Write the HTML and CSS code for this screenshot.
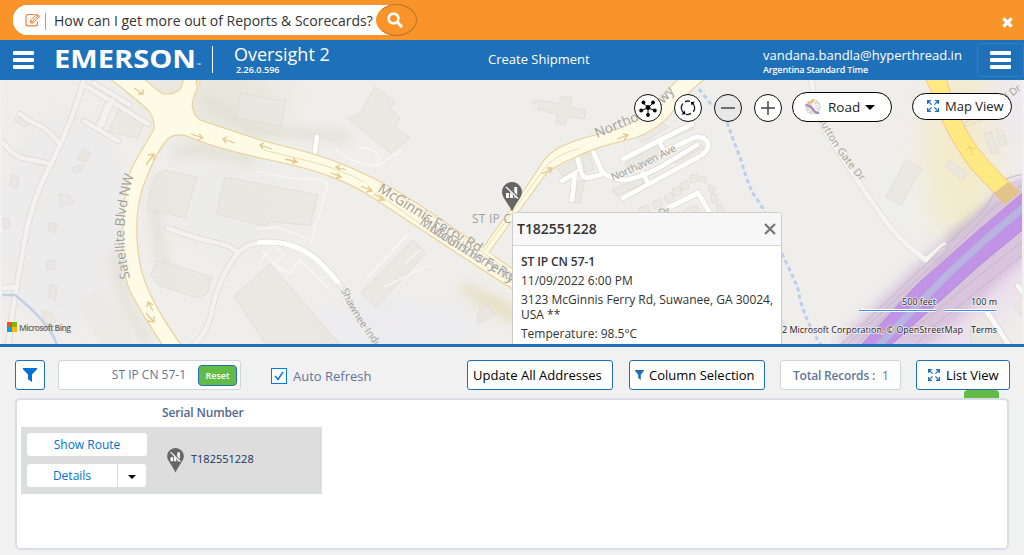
FILE: index.html
```html
<!DOCTYPE html>
<html lang="en">
<head>
<meta charset="utf-8">
<title>Oversight 2</title>
<link rel="stylesheet" href="styles.css">
</head>
<body>
<svg class="defs" width="0" height="0" aria-hidden="true">
  <symbol id="pin" viewBox="0 0 20 30">
    <path fill="#666" d="M10 0C4.500 0 0 4.500 0 10c0 5.500 5.500 10 10 19.500C14.500 20 20 15.500 20 10 20 4.500 15.500 0 10 0z"/>
    <path fill="#fff" d="M4 11h3v5H4zM8 8.500h3V16H8zM12.300 5h2.900v11h-2.900z"/>
    <path stroke="#666" stroke-width="2.800" d="M4.500 4.500l12 12"/><path stroke="#fff" stroke-width="1.300" d="M4 5l12 11.500"/>
  </symbol>
  <symbol id="expand" viewBox="0 0 12 12">
    <path fill="none" stroke="#1e70b9" stroke-width="1.300" d="M.6 4V.6H4M.6.6l4 4M8 .6h3.400V4M11.400.6l-4 4M.6 8v3.400H4M.6 11.400l4-4M11.400 8v3.400H8M11.400 11.400l-4-4"/>
  </symbol>
  <symbol id="funnel" viewBox="0 0 14 14"><path d="M0 0h14v1.200L9 6.500V14l-4-2.800V6.500L0 1.200z"/></symbol>
</svg>

<div class="ask">
  <div class="ask-box">
    <svg class="edit" viewBox="0 0 16 14"><path fill="none" stroke="#f47b42" stroke-width="1.200" d="M9.500 1.500H3A2 2 0 0 0 1 3.500v7.300a2 2 0 0 0 2 2h7.500a2 2 0 0 0 2-2V8.500"/><path fill="none" stroke="#f47b42" d="M5.500 10V7.200L12 .9l2.700 2.600L8.300 10z"/><path stroke="#f47b42" stroke-width="1" d="M6.600 8.900L13 2.600M11 1.800l3 3M5.700 7.400l2.600 2.600"/></svg>
    <span class="caret"></span>
    <span class="ask-text">How can I get more out of Reports &amp; Scorecards?</span>
    <span class="ask-go"><svg viewBox="0 0 16 16"><circle cx="6.500" cy="6.500" r="4.900" fill="none" stroke="#fff" stroke-width="2.600"/><path stroke="#fff" stroke-width="3" stroke-linecap="round" d="M10.600 10.600l3.500 3.500"/></svg></span>
  </div>
  <svg class="ask-close" viewBox="0 0 12 12"><path stroke="#fff" stroke-width="3.800" d="M1.500 1.500l9 9M10.500 1.500l-9 9"/></svg>
</div>

<header class="bar">
  <span class="burger"><i></i><i></i><i></i></span>
  <svg class="brand" viewBox="0 0 150 30"><text x="0" y="21" textLength="142" lengthAdjust="spacingAndGlyphs">EMERSON</text><text class="tm" x="143" y="20">™</text></svg>
  <div class="product"><span class="name">Oversight 2</span><span class="ver">2.26.0.596</span></div>
  <span class="page">Create Shipment</span>
  <div class="user"><span class="mail">vandana.bandla@hyperthread.in</span><span class="tz">Argentina Standard Time</span></div>
  <span class="menu"><span class="burger"><i></i><i></i><i></i></span></span>
</header>

<section class="map">
<svg class="canvas" viewBox="0 80 1024 264">
  <defs>
    <filter id="b" x="-50%" y="-50%" width="200%" height="200%"><feGaussianBlur stdDeviation="6"/></filter>
    <filter id="b2" x="-50%" y="-50%" width="200%" height="200%"><feGaussianBlur stdDeviation="16"/></filter>
    <path id="p-sat" d="M130 278C124 255 123 232 126 212C128 196 131 184 135 172"/>
    <path id="p-mcg" d="M377 191L412 213Q448 235 481 254"/>
    <path id="p-mcg2" d="M419 224Q458 250 516 284"/>
    <path id="p-mcg3" d="M429 231Q466 255 514 284"/>
    <path id="p-sha" d="M341 290Q352 318 380 352"/>
    <path id="p-nor" d="M597 138L640 120Q662 109 678 87"/>
    <path id="p-hav" d="M613 181Q645 167 680 149"/>
    <path id="p-sut" d="M818 119Q835 153 863 184"/>
    <g id="streets">
      <path d="M84 78Q76 112 53 160C37 190 32 208 27 228L15 295 8 346M0 288l15-1M20 114q10 8 23 13 10 8 18 18M1 140q12 16 22 18l28 6M86 86l36 22 26 16M94 83l36 22M107 105l-8 22M84 121l34 20M112 100l-10 25M168 228q28 11 50 15 14 3 20 10Q218 277 211 315 205 337 192 346M238 253q10-11 30-11 30 0 51 19 18 18 24 28"/>
    </g>
    <g id="lots">
      <path d="M577 157l4 15q1 5 6 6l13-3M562 181l13-8-3 27M593 151l9 21q9 8 25 8 18-4 35-14l35-21M315 152l2-15M668 208l30-15 13 22"/>
      <path d="M623 159l69-35M660 143l4 8M643 173l5 10M623 198l79-43q9-7 5-14-6-6-14-3l-32 15"/>
    </g>
  </defs>
  <rect x="0" y="80" width="1024" height="264" fill="#efeeeb"/>
  <g filter="url(#b2)">
    <ellipse cx="65" cy="220" rx="65" ry="110" fill="#ecebec"/>
    <ellipse cx="215" cy="100" rx="75" ry="45" fill="#e9e7dd"/>
    <ellipse cx="230" cy="210" rx="70" ry="50" fill="#ecece9"/>
    <ellipse cx="390" cy="325" rx="100" ry="22" fill="#ecebef"/>
    <ellipse cx="960" cy="150" rx="36" ry="90" fill="#f3ebc9"/>
    <ellipse cx="1010" cy="110" rx="22" ry="40" fill="#efe8f0"/>
    <ellipse cx="905" cy="130" rx="20" ry="50" fill="#f1ecec"/>
    <path d="M1040 180L830 360h130l100-110z" fill="#ecdced"/>
    <ellipse cx="905" cy="190" rx="20" ry="22" fill="#ebf1ec"/>
  </g>
  <g filter="url(#b)">
    <path d="M205 100L255 130 350 137M174 155q25-12 80 8M158 180q-8 65 15 103M115 250q2 50 35 94" fill="none" stroke="#dfdccf" stroke-width="8"/>
    <path d="M460 286l55 25M475 300l45 20" stroke="#e6e0c4" stroke-width="10"/>
    <path d="M1030 172L935 248 835 345 930 345 1030 254z" fill="#d6c3dc"/>
    <path d="M1000 200L950 240" stroke="#b5a4b6" stroke-width="6"/>
  </g>
  <!-- buildings -->
  <g fill="#e9e6e1" fill-opacity=".85" stroke="#dfdbd5" stroke-width=".8">
    <path d="M241 93l41 8 4-3-5 28-45-8zM157 174l9-4 31 7-12 41-38-10 4-17zM225 177l93 18-8 30-40-3-5 4-49-12zM157 260l55 17-5 17-10 4-39-13-7-10zM234 296l36-32 70 80h-74zM375 87l20 14-5 8 10 9-5 8 15 12-19 15-43-34 13-7zM413 240l13 13-50 54-15-14zM120 106l24 17-6 15-30-6z"/>
    <path stroke="none" d="M77 304l18-14 28 20 12 34h-35z" opacity=".5"/>
    <path d="M478 312l11-8 4 12-16 8zM906 160l16 8-21 37-15-8zM950 160l17 13-4 8-18-15zM984 134l7-3 8 22-8 1zM996 129l7 2 4 13-7 2zM540 100l18 4 4-8 10 2-2 9 16 3-2 9-17-2-2 8-9-2 1-9-20-5zM532 102l4-4 2 2-4 5z"/>
    <path d="M14 120l8-5 12 7-10 5zM78 156l6-7 7 4-5 9-8-2zM73 167l11-2-3 6-8 2zM12 175l7 2-2 12-8-4zM59 194l10 1 5 8-13 3zM50 223l7 1-2 9-7-3zM3 218l6 1 1 10-7-1zM47 261h8v8h-8zM50 285l7 1-2 15-6-3zM42 310l9 3 5 9-12 3z"/>
    <path d="M557 169l17-9 5 8-17 8zM582 155l7-3 5 17-9 4zM625 163l32-17 5 7-33 17zM672 158l26-15 6 4-29 17zM612 190l31-14 4 6-31 14zM635 135l26-13 8 5-27 16zM666 134l24-12 3 7-23 10zM578 182l7-2-5 24-6-1z"/>
    <path d="M639 208l9-3 3 7-11 2zM652 202l8-3 3 7-9 3zM664 196l8-4 2 8-8 3zM672 189l8-3 2 8-8 3zM680 184l7-4 2 8-7 3zM690 176l7-2 0 8-7 1zM700 176l7 1-1 6-7-2zM709 184l7 4-2 5-6-3zM711 193l6 2 1 7-6 1zM716 204l6 1 3 7-7 1zM685 210l12-5 2 8h-16zM1013 307l9-9v20zM970 320l18-9 15 33h-32zM780 320l4 1v5h-5z"/>
  </g>
  <!-- footpaths -->
  <path fill="none" stroke="#f9f8f5" stroke-width="1.300" d="M257 171q25 8 50 8 20 0 21 6l-18 60M257 229l20-2 30 11M335 146q7 15 42 20 8-17-20-19M377 166l25-16M258 264l16-19 10 9-10 10 16 9 10-13 28 28M367 278l40-43M384 287l46-22M262 250l20 22M405 263l14-12"/>
  <!-- side streets -->
  <g fill="none" stroke-linecap="round">
    <use href="#streets" stroke="#dad5c9" stroke-width="6"/><use href="#streets" stroke="#f3f2f0" stroke-width="4.800"/>
    <path stroke="#fff" stroke-width="4.600" stroke-linecap="butt" d="M257 243q35-5 61 18 14 13 20 22"/>
    <path stroke="#dedacd" d="M342 286q17 32 35 58"/>
    <use href="#lots" stroke="#dfd8c8" stroke-width="6.200"/><use href="#lots" stroke="#fff" stroke-width="4.800"/>
    <path stroke="#dcd8ce" stroke-width="6.200" d="M811 78q3 25 15 55l36 54q22 33 34 47 12 13 30 26l18-15"/><path stroke="#f5f4f2" stroke-width="5" d="M811 78q3 25 15 55l36 54q22 33 34 47 12 13 30 26l18-15"/>
  </g>
  <!-- streams -->
  <path d="M2 295h13q35 28 42 50" fill="none" stroke="#c3d0e8" stroke-width="2.500"/>
  <path d="M699 89l12 15 12 7 10 28 8 21q5 18 11 32l12 18 20 48q8 16 14 31 5 30 24 57" fill="none" stroke="#b9cff2" stroke-width="3" stroke-dasharray="4.500 3"/>
  <!-- main roads -->
  <g fill="#fdfae6" stroke="#ead09a" stroke-width="1.100">
    <path d="M109 78L133 97 148 110Q155 118 154 129L139 155Q131 168 129 176C121 208 120 260 128 286Q133 300 163 346H182Q152 305 142 273C134 240 136 210 142 190 150 167 160 147 168 139Q176 132 190 137 205 145 260 158C320 170 345 180 375 199L440 242 520 294V274L430 212Q390 185 360 172C325 155 295 149 260 140L200 120Q193 115 192 104 193 98 201 78H183Q184 95 163 94 153 87 143 78z"/>
    <path d="M480 252L518 199 541 165Q545 156 560 147 580 138 600 134 625 128 640 118C657 107 664 90 680 78H706Q683 96 670 115 658 129 635 138C604 145 590 150 574 158Q558 164 546 174L487 255z"/>
  </g>
  <path d="M478 249l15 10" stroke="#fdfae6" stroke-width="6"/>
  <path fill="none" stroke="#f0dcae" stroke-width="1" d="M264 150l48 12q30 8 52 20M375 192l60 42 78 50M380 184l55 34 78 56M484 251l60-82q8-13 36-21"/>
  <path fill="none" stroke="#e3c98f" stroke-width="1.300" d="M134 88l9 6m-5 0h5v-5M191 134l12 4m-4-4l4 4-5 2M235 143l-12-4m4-2l-4 2 3 4M272 149l-12-4m4-2l-4 2 3 4M285 159l12 3m-4-4l4 4-5 1M146 165l8-11m-6 1l6-1v6M153 311l-5-9m-1 5l1-5 5 3M146 313l8 9m0-6v6l-6-1M346 170l-10-3m4-2l-4 2 4 3M331 173l10 4m-4-4l4 4-5 1M361 186l11 5m-4-5l4 5-6 1M374 194l10 6m-4-5l4 5-6 0M617 139l11-4m-5-1l5 1-4 5M542 174l10-6m-5 0h5l-2 5M196 85l2-8"/>
  <!-- interstate -->
  <path fill="#d8c7dd" fill-opacity=".6" d="M1024 178Q1004 182 993 194L948 247 837 346H925L1024 256z"/>
  <path fill="none" stroke="#c3b3c4" stroke-width=".9" d="M1024 174Q1000 178 994 189 994 200 980 214L926 264 840 346M1024 184Q998 200 970 232L855 346M926 264l16-17q5-3 5 2 0 3-4 6L846 346M1024 240l-54 43-62 51M1024 254l-90 72-20 20"/>
  <path fill="#c193e6" stroke="#b084cf" stroke-width=".8" d="M1026 190L973 235 917 285 860 346H890L980 265 1026 227z"/>
  <path fill="none" stroke="#b8b4e0" stroke-width="7" d="M1030 202L985 240 947 275 878 346"/>
  <path fill="#ffe982" stroke="#f1c58b" stroke-width="1" d="M925 78Q936 100 942 120 955 148 972 170L1005 204 1020 192Q983 159 969 135 955 110 946 78z"/>
  <path d="M1005 204l15-12-12-10-14 11z" fill="#dbb98c" opacity=".8"/>
  <path d="M962 124l45-19M963 128l46-20" stroke="#e2dbc4"/>
  <path d="M973 156l-3-9m-3 4l2-5 6 3" fill="none" stroke="#ead27b"/>
  <path d="M1018 286q8 10 10 18M987 312l24 36" fill="none" stroke="#d8d2cc" stroke-width="6.500" stroke-linecap="round"/><path d="M1018 286q8 10 10 18M987 312l24 36" fill="none" stroke="#faf9f6" stroke-width="5" stroke-linecap="round"/>

  <g class="labels">
    <text font-size="13.500"><textPath href="#p-sat" textLength="104">Satellite Blvd NW</textPath></text>
    <text font-size="14"><textPath href="#p-mcg" textLength="119">McGinnis Ferry Rd</textPath></text>
    <text font-size="13"><textPath href="#p-mcg2" textLength="108">McGinnis Ferry Rd</textPath></text>
    <text font-size="14"><textPath href="#p-mcg3" textLength="98">McGinnis Ferry</textPath></text>
    <text font-size="10.500"><textPath href="#p-sha">Shawnee Indu</textPath></text>
    <text font-size="13.500"><textPath href="#p-nor" textLength="92">Northolt Pkwy</textPath></text>
    <text font-size="10.500"><textPath href="#p-hav" textLength="71">Northaven Ave</textPath></text>
    <text font-size="10.500"><textPath href="#p-sut" textLength="76">Sutton Gate Dr</textPath></text>
    <text font-size="10.500" transform="translate(1004 103) rotate(-37)">ill Dr</text>
    <text font-size="10.500" transform="translate(660 217) rotate(-20)">Dr</text>
    <text font-size="12" x="472" y="223" textLength="77">ST IP CN 57-1</text>
  </g>
  <path fill="#f1f1f1" d="M0 80h2v264H0zM1022 80h2v264h-2z"/>
  <g><path fill="#f25022" d="M7 322h5v5H7z"/><path fill="#7fba00" d="M12 322h5v5h-5z"/><path fill="#00a4ef" d="M7 327h5v5H7z"/><path fill="#ffb900" d="M12 327h5v5h-5z"/></g>
  <text class="bing" x="19" y="331" textLength="52">Microsoft Bing</text>
  <g class="credits">
    <text x="902" y="305" textLength="34">500 feet</text><text x="971" y="305" textLength="26">100 m</text>
    <text x="782" y="333" textLength="181">2 Microsoft Corporation, © OpenStreetMap</text><text x="971" y="333" textLength="26">Terms</text>
  </g>
  <path d="M859 310.500h77M945 310.500h51" stroke="#fff" stroke-width="3"/><path d="M859 310.500h77M945 310.500h51" stroke="#3c8df0" stroke-width="1.200"/>
  <use href="#pin" x="502" y="182" width="20" height="30"/>
</svg>

<div class="tools">
  <span class="round"><svg viewBox="0 0 26 26"><path stroke="#000" d="M13 13L8.500 8M13 13l5-5M13 13l-7 2.500M13 13l7 2.500M13 13v7"/><circle cx="13" cy="12.500" r="2.400"/><circle cx="8.500" cy="7.500" r="1.900"/><circle cx="18" cy="7.500" r="1.900"/><circle cx="6.200" cy="15.500" r="1.900"/><circle cx="19.800" cy="15.500" r="1.900"/><circle cx="13" cy="20" r="1.900"/></svg></span>
  <span class="round"><svg viewBox="0 0 26 26"><path fill="none" stroke="#222" stroke-width="1.300" d="M9.500 18.300A6.300 6.300 0 0 1 8 8.500M17 7.700A6.300 6.300 0 0 1 18.300 16.800M10 6.900a6.300 6.300 0 0 1 5-.6M11 19.400a6.300 6.300 0 0 0 5-1"/><path d="M6.500 19.500l4-.300-.8-3.600zM19.800 6.800l-4 .2.900 3.600z"/></svg></span>
  <span class="round out"><svg viewBox="0 0 26 26"><path stroke="#444" stroke-width="1.500" d="M6 13h14"/></svg></span>
  <span class="round"><svg viewBox="0 0 26 26"><path stroke="#444" stroke-width="1.500" d="M6 13h14M13 6v14"/></svg></span>
  <span class="pill road"><svg class="thumb" viewBox="0 0 16 16"><circle cx="8" cy="8" r="7.800" fill="#dedbd3"/><path d="M5 1l2 4 6 8M10 1L8 6l6 3M3 13l8-8 4 2M8 15l4-5" fill="none" stroke="#fff"/><path d="M3 4q4 0 6-4" fill="none" stroke="#edbc65" stroke-width="1.800"/><path d="M.5 6Q5 6 8 10.500t6 3" fill="none" stroke="#a980cb" stroke-width="2"/></svg><span>Road</span><svg class="tri" viewBox="0 0 10 5"><path d="M0 0h10L5 5z"/></svg></span>
  <span class="pill view"><svg class="ex"><use href="#expand"/></svg><span>Map View</span></span>
</div>

<div class="popup">
  <div class="popup-head"><span>T182551228</span><svg viewBox="0 0 12 12"><path stroke="#757575" stroke-width="2.200" d="M1 1l10 10M11 1L1 11"/></svg></div>
  <div class="popup-body">
    <p class="strong">ST IP CN 57-1</p>
    <p>11/09/2022 6:00 PM</p>
    <p class="addr">3123 McGinnis Ferry Rd, Suwanee, GA 30024, USA **</p>
    <p>Temperature: 98.5°C</p>
  </div>
</div>
</section>

<div class="controls">
  <span class="btn filter"><svg><use href="#funnel"/></svg></span>
  <span class="field"><span>ST IP CN 57-1</span><b>Reset</b></span>
  <span class="check"><svg viewBox="0 0 14 14"><path fill="none" stroke="#0a76e8" stroke-width="1.500" d="M3 7l3 3.500L11 3"/></svg></span>
  <span class="auto">Auto Refresh</span>
  <span class="btn update">Update All Addresses</span>
  <span class="btn column"><svg viewBox="0 0 14 14" preserveAspectRatio="none"><use href="#funnel"/></svg>Column Selection</span>
  <span class="total"><b>Total Records :</b><span>1</span></span>
  <span class="btn list"><svg><use href="#expand"/></svg>List View</span>
  <i class="tab"></i>
</div>

<main class="panel">
  <div class="th">Serial Number</div>
  <div class="row">
    <div class="acts">
      <span class="act">Show Route</span>
      <div class="split"><span class="act details">Details</span><span class="act drop"><svg viewBox="0 0 8 4"><path d="M0 0h8L4 4z"/></svg></span></div>
    </div>
    <svg class="row-pin"><use href="#pin"/></svg>
    <span class="serial">T182551228</span>
  </div>
</main>
</body>
</html>
```
FILE: styles.css
```css
* { box-sizing: border-box; }
body { margin: 0; width: 1024px; height: 555px; overflow: hidden; background: #f1f1f1; font-family: "Open Sans", sans-serif; font-size: 13px; color: #333; white-space: nowrap; }
svg { display: block; flex: none; }
span { flex: none; }
.defs { position: absolute; }

.ask { display: flex; height: 40px; background: #f9942a; padding: 4px 11px 0 13px; justify-content: space-between; }
.ask-box { display: flex; align-items: center; width: 404px; height: 32px; padding-left: 12px; background: linear-gradient(#fff, #fff) 15px 1px / 360px 30px no-repeat, radial-gradient(circle at 15px 16px, #fff 15px, transparent 15.5px), linear-gradient(#fff, #fff) 370px 1px / 10px 30px no-repeat; }
.edit { width: 16px; height: 14px; }
.caret { width: 1px; height: 17px; background: #f9942a; margin: 2px 8px 0 4px; }
.ask-text { font-size: 14px; letter-spacing: 0; width: 322px; }
.ask-go { width: 41px; height: 32px; border: 1px solid #bd752b; border-left-color: #f9942a; border-radius: 50%; background: #f9942a; display: grid; place-items: center; }
.ask-go svg { width: 16px; height: 16px; margin-right: 3px; }
.ask-close { width: 11px; height: 11px; margin-top: 13px; }

.bar { display: flex; height: 40px; background: #1e70b9; color: #fff; align-items: flex-start; }
.burger { display: flex; flex-direction: column; gap: 3px; }
.burger i { display: block; width: 21px; height: 4px; background: #fff; border-radius: 1px; }
.bar > .burger { margin: 11px 0 0 13px; }
.brand { width: 150px; height: 30px; margin: 7px 0 0 20px; overflow: visible; }
.brand text { font-weight: 700; font-size: 24.500px; fill: #fff; }
.brand .tm { font-size: 5px; }
.product { border-left: 1px solid #fff; height: 27px; margin: 6px 0 0 8px; padding-left: 21px; width: 276px; display: flex; flex-direction: column; }
.name { font-size: 18px; line-height: 18px; margin-top: -1px; }
.ver { font-size: 9px; line-height: 11px; padding-left: 2px; margin-top: 1px; font-weight: 600; }
.page { font-size: 13px; line-height: 20px; margin-top: 9px; width: 275px; }
.user { display: flex; flex-direction: column; width: 214px; padding-top: 7px; }
.mail { font-size: 13px; line-height: 17px; }
.tz { font-size: 9px; line-height: 12px; font-weight: 600; letter-spacing: -.15px; }
.menu { width: 47px; height: 34px; margin-top: 3px; border: 1px solid #337ebf; border-radius: 4px; padding: 7px 12px; }

.map { position: relative; height: 267px; border-bottom: 3px solid #1e70b9; overflow: hidden; }
.canvas { width: 1024px; height: 264px; }
.labels text { fill: #a19e99; stroke: #f5f3ee; stroke-opacity: .7; stroke-width: 1.200px; paint-order: stroke; }
.bing { font-size: 8.500px; fill: #666; font-weight: 600; }
.credits text { font-size: 9px; fill: #222; stroke: #f3eff3; stroke-width: 1.500px; paint-order: stroke; }
.tools { position: absolute; top: 12px; left: 634px; display: flex; align-items: flex-start; }
.round { width: 28px; height: 28px; margin: 2px 12px 0 0; border: 1px solid #111; border-radius: 50%; background: #fff; }
.round svg { width: 26px; height: 26px; }
.out { background: #e8e8e9; }
.pill { display: flex; align-items: center; background: #fff; border: 1px solid #000; border-radius: 16px; color: #222; }
.road { width: 100px; height: 30px; padding-left: 12px; margin-left: -2px; font-size: 13.500px; }
.thumb { width: 16px; height: 16px; margin-right: 7px; }
.tri { width: 10px; height: 5px; margin-left: 5px; }
.view { width: 100px; height: 27px; margin: 1px 0 0 20px; padding-left: 14px; font-size: 13px; }
.view span { margin-top: -1px; }
.ex { width: 12px; height: 12px; margin: -1px 6px 0 0; }

.popup { position: absolute; left: 512px; top: 132px; width: 270px; height: 150px; background: #fff; border: 1px solid #ccc; border-radius: 4px; white-space: normal; }
.popup-head { display: flex; justify-content: space-between; align-items: center; height: 33px; background: #f7f7f7; border-bottom: 1px solid #d8d8d8; padding: 0 5px 0 4px; font-size: 14px; font-weight: 600; letter-spacing: -.03px; border-radius: 4px 4px 0 0; }
.popup-head span { margin-top: -1px; }
.popup-head svg { width: 12px; height: 12px; }
.popup-body { padding: 8px 5px 0 8px; font-size: 12px; line-height: 15px; color: #333; }
.popup-body p { margin: 0 0 4px; }
.popup-body .strong { font-weight: 600; letter-spacing: -.1px; }

.controls { position: relative; display: flex; height: 51px; padding: 13px 14px 0 15px; }
.btn { display: flex; align-items: center; height: 30px; background: #fff; border: 1px solid #1e70b9; border-radius: 3px; color: #000; font-size: 13px; }
.filter { width: 30px; justify-content: center; }
.filter svg { width: 14px; height: 14px; fill: #0070d2; }
.field { display: flex; align-items: center; justify-content: flex-end; width: 183px; height: 30px; margin-left: 13px; padding-right: 3px; background: #fff; border: 1px solid #d0d4dc; border-radius: 3px; color: #61759a; font-size: 12px; }
.field > span { margin-top: -2px; }
.field b { width: 39px; height: 21px; margin-left: 12px; background: #62bb46; border: 1px solid #1e70b9; border-radius: 4px; color: #fff; font-size: 9px; line-height: 19px; font-weight: 600; text-align: center; }
.check { width: 16px; height: 16px; margin: 8px 6px 0 30px; border: 1px solid #0a76e8; background: #fff; }
.check svg { width: 14px; height: 14px; }
.auto { width: 174px; line-height: 32px; font-size: 13px; color: #61759a; }
.update { width: 146px; padding-left: 5px; }
.column { width: 136px; margin-left: 16px; padding-left: 5px; }
.column svg { width: 9px; height: 10px; margin-right: 5px; fill: #1e70b9; }
.total { display: flex; align-items: center; width: 121px; height: 30px; margin: 0 15px; padding-left: 12px; border: 1px solid #d0d4dc; border-radius: 3px; background: #fff; color: #61759a; font-size: 12px; }
.total b { font-weight: 600; margin-right: 7px; letter-spacing: -.2px; }
.list { width: 94px; padding-left: 11px; }
.list svg { width: 12px; height: 12px; margin-right: 6px; }
.tab { position: absolute; left: 964px; top: 43px; width: 35px; height: 8px; background: #62bb46; border-radius: 4px 4px 0 0; }

.panel { margin: 0 15px; width: 994px; height: 152px; background: #fff; border: 2px solid #d8dde6; border-radius: 5px; padding: 0 4px; }
.th { width: 301px; height: 27px; padding-left: 141px; line-height: 26px; font-size: 12px; font-weight: 600; letter-spacing: -.15px; color: #54698d; }
.row { display: flex; width: 301px; height: 67px; padding: 6px; background: #ddd; border-bottom: 1px solid #d8dde6; }
.acts { display: flex; flex-direction: column; gap: 8px; }
.act { display: block; width: 120px; height: 23px; background: #fff; border-radius: 3px; color: #0070d2; font-size: 12px; line-height: 23px; text-align: center; }
.split { display: flex; gap: 1px; }
.details { width: 90px; border-radius: 3px 0 0 3px; }
.drop { width: 28px; border-radius: 0 3px 3px 0; display: grid; place-items: center; }
.drop svg { width: 8px; height: 4px; margin-top: 3px; }
.row-pin { width: 17px; height: 25px; margin: 15px 7px 0 20px; }
.serial { margin-top: 18px; font-size: 11px; line-height: 16px; color: #16325c; }
```
